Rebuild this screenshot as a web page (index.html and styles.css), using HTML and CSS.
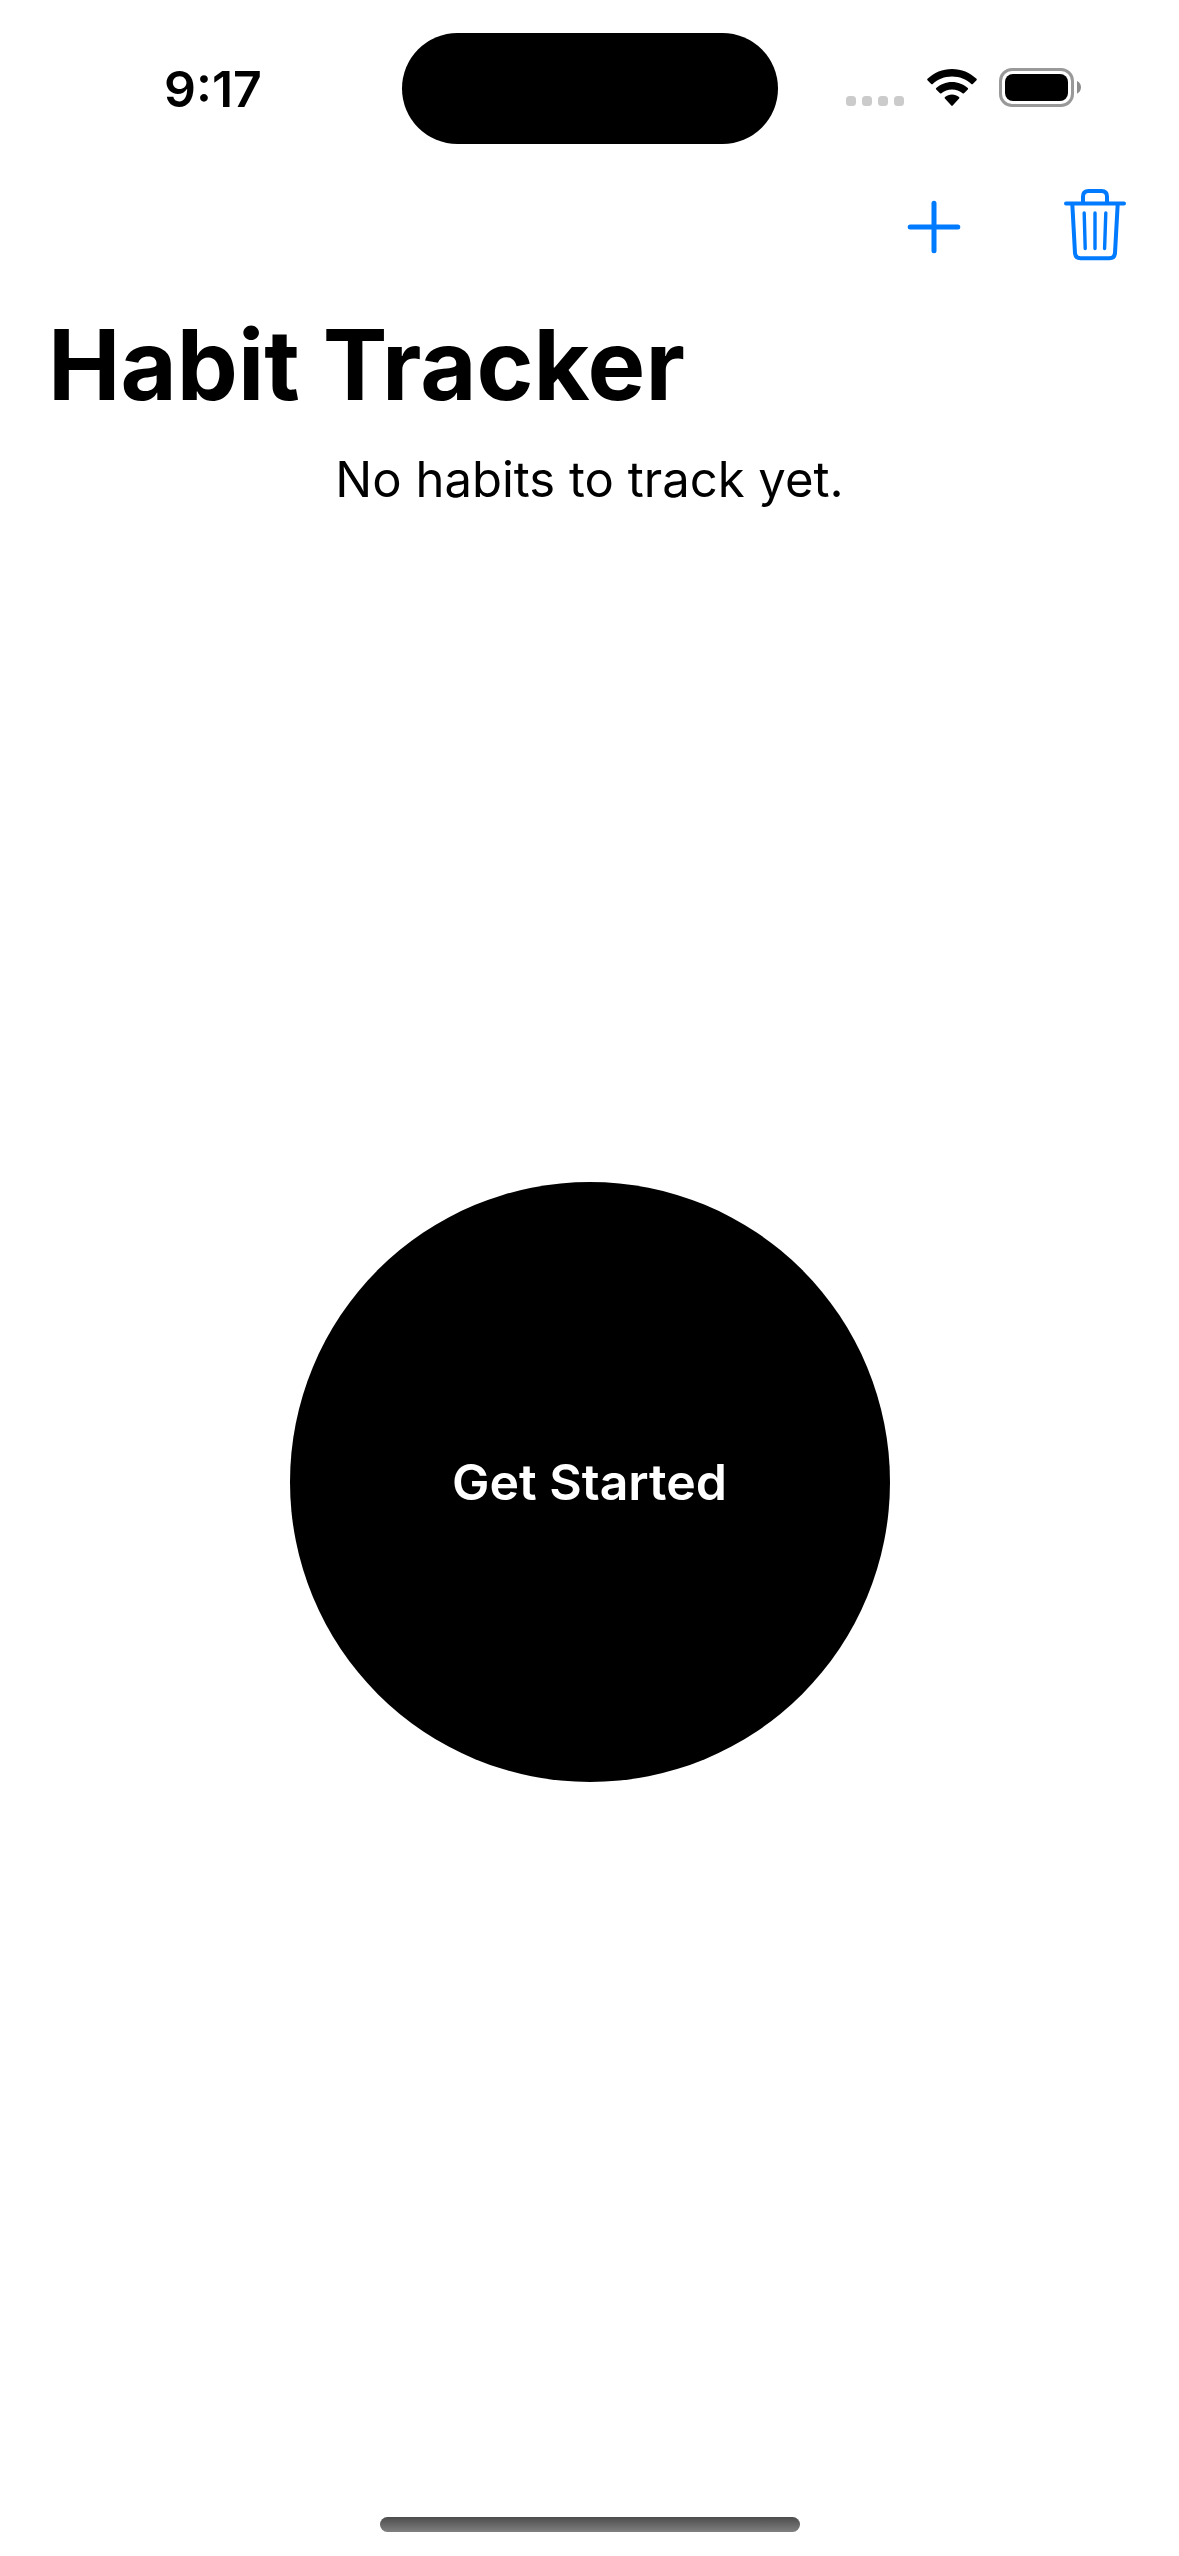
FILE: index.html
```html
<!DOCTYPE html>
<html lang="en">
<head>
<meta charset="utf-8">
<meta name="viewport" content="width=device-width, initial-scale=1">
<title>Habit Tracker</title>
<link rel="stylesheet" href="styles.css">
</head>
<body class="screen">
<div class="status-bar">
  <time class="status-time">9:17</time>
  <div class="island"></div>
  <div class="status-icons">
    <svg class="icon-signal" width="58" height="38" viewBox="0 0 58 38" fill="#cbcbcb" aria-hidden="true">
      <rect x="0" y="27" width="10" height="10" rx="3.5"/>
      <rect x="16" y="27" width="10" height="10" rx="3.5"/>
      <rect x="32" y="27" width="10" height="10" rx="3.5"/>
      <rect x="48" y="27" width="10" height="10" rx="3.5"/>
    </svg>
    <svg class="icon-wifi" width="50" height="38" viewBox="0 0 50 38" aria-hidden="true">
      <path d="M25 0C15.500 0 6.900 3.700.500 9.800Q-.200 10.600.500 11.300L4.200 15Q5 15.700 5.700 15C10.800 10.300 17.500 7.600 25 7.600S39.200 10.300 44.300 15Q45 15.700 45.800 15L49.500 11.300Q50.200 10.600 49.500 9.800C43.100 3.700 34.500 0 25 0Z"/>
      <path d="M25 12.900C18.900 12.900 13.400 15.200 9.200 19Q8.500 19.700 9.200 20.400L13 24.200Q13.700 24.800 14.400 24.200C17.200 21.800 20.900 20.400 25 20.400S32.800 21.800 35.600 24.200Q36.300 24.800 37 24.200L40.800 20.400Q41.500 19.700 40.800 19C36.600 15.200 31.100 12.900 25 12.900Z"/>
      <path d="M25 25.600C22.300 25.600 19.900 26.500 18 28.100Q17.200 28.800 17.900 29.500L24.300 36.600Q25 37.300 25.700 36.600L32.100 29.500Q32.800 28.800 32 28.100C30.100 26.500 27.700 25.600 25 25.600Z"/>
    </svg>
    <svg class="icon-battery" width="82" height="39" viewBox="0 0 82 39" aria-hidden="true">
      <rect x="1.500" y="1.500" width="72" height="36" rx="11.500" fill="none" stroke="#999" stroke-width="3"/>
      <rect x="6" y="6" width="63" height="27" rx="8"/>
      <path d="M78 13C80.500 14 82 16.500 82 19.300S80.500 24.700 78 25.700Z" fill="#8c8c8c"/>
    </svg>
  </div>
</div>
<nav class="toolbar">
  <button class="tool" type="button" aria-label="Add habit">
    <svg width="54" height="54" viewBox="0 0 54 54" fill="none" stroke="currentColor" stroke-width="5" stroke-linecap="round" aria-hidden="true">
      <path d="M27 3.200V50.800M3.200 27H50.800"/>
    </svg>
  </button>
  <button class="tool" type="button" aria-label="Delete habits">
    <svg width="62" height="76" viewBox="0 0 62 76" fill="none" stroke="currentColor" stroke-width="4" stroke-linecap="round" stroke-linejoin="round" aria-hidden="true">
      <path d="M2 14.500H60"/>
      <path d="M19 13.500V7.500Q19 2 24.500 2H37.500Q43 2 43 7.500V13.500"/>
      <path d="M8.300 15L11 64Q11.400 69.200 16.500 69.200H45.500Q50.600 69.200 51 64L53.700 15"/>
      <path stroke-width="3.400" d="M20.200 24L21.200 59.500M31 24V59.500M41.800 24L40.600 59.500"/>
    </svg>
  </button>
</nav>
<main class="content">
  <h1 class="title">Habit Tracker</h1>
  <p class="empty">No habits to track yet.</p>
  <div class="stage">
    <button class="start" type="button">Get Started</button>
  </div>
</main>
<footer class="home-area"><div class="home-indicator"></div></footer>
</body>
</html>
```

FILE: styles.css
```css
* {
  box-sizing: border-box;
}

.screen {
  display: flex;
  flex-direction: column;
  min-height: 100vh;
  margin: 0;
  background: #fff;
  color: #000;
  font-family: Inter, "Liberation Sans", sans-serif;
  font-size: 50px;
  line-height: 60px;
}

.status-bar {
  display: grid;
  grid-template-columns: 1fr 376px 1fr;
  align-items: center;
  height: 177px;
}

.status-time {
  padding-left: 164px;
  font-weight: 600;
}

.island {
  height: 111px;
  border-radius: 56px;
  background: #000;
}

.status-icons {
  display: flex;
  align-items: center;
  justify-content: flex-end;
  padding: 0 98px 2px 0;
}

.icon-wifi {
  margin: 0 22px 0 23px;
}

.toolbar {
  display: flex;
  align-items: center;
  justify-content: flex-end;
  gap: 85px;
  height: 100px;
  padding-right: 46px;
}

.tool {
  display: flex;
  align-items: center;
  justify-content: center;
  min-width: 76px;
  height: 88px;
  padding: 0;
  border: 0;
  background: none;
  color: #007aff;
}

.content {
  display: flex;
  flex: 1;
  flex-direction: column;
  padding: 28px 48px 0;
}

.title {
  margin: 0 0 25px;
  font-size: 97px;
  font-weight: 700;
  line-height: 120px;
}

.empty {
  margin: 0;
  font-size: 49px;
  text-align: center;
}

.stage {
  display: flex;
  flex: 1;
  align-items: center;
  justify-content: center;
}

.start {
  width: 600px;
  height: 600px;
  border: 0;
  border-radius: 50%;
  background: #000;
  color: #fff;
  font: inherit;
  font-weight: 600;
}

.home-area {
  display: flex;
  align-items: flex-end;
  justify-content: center;
  height: 102px;
  padding-bottom: 24px;
}

.home-indicator {
  width: 420px;
  height: 15px;
  border-radius: 8px;
  background: linear-gradient(#4c4c4c, #808080);
}
```
